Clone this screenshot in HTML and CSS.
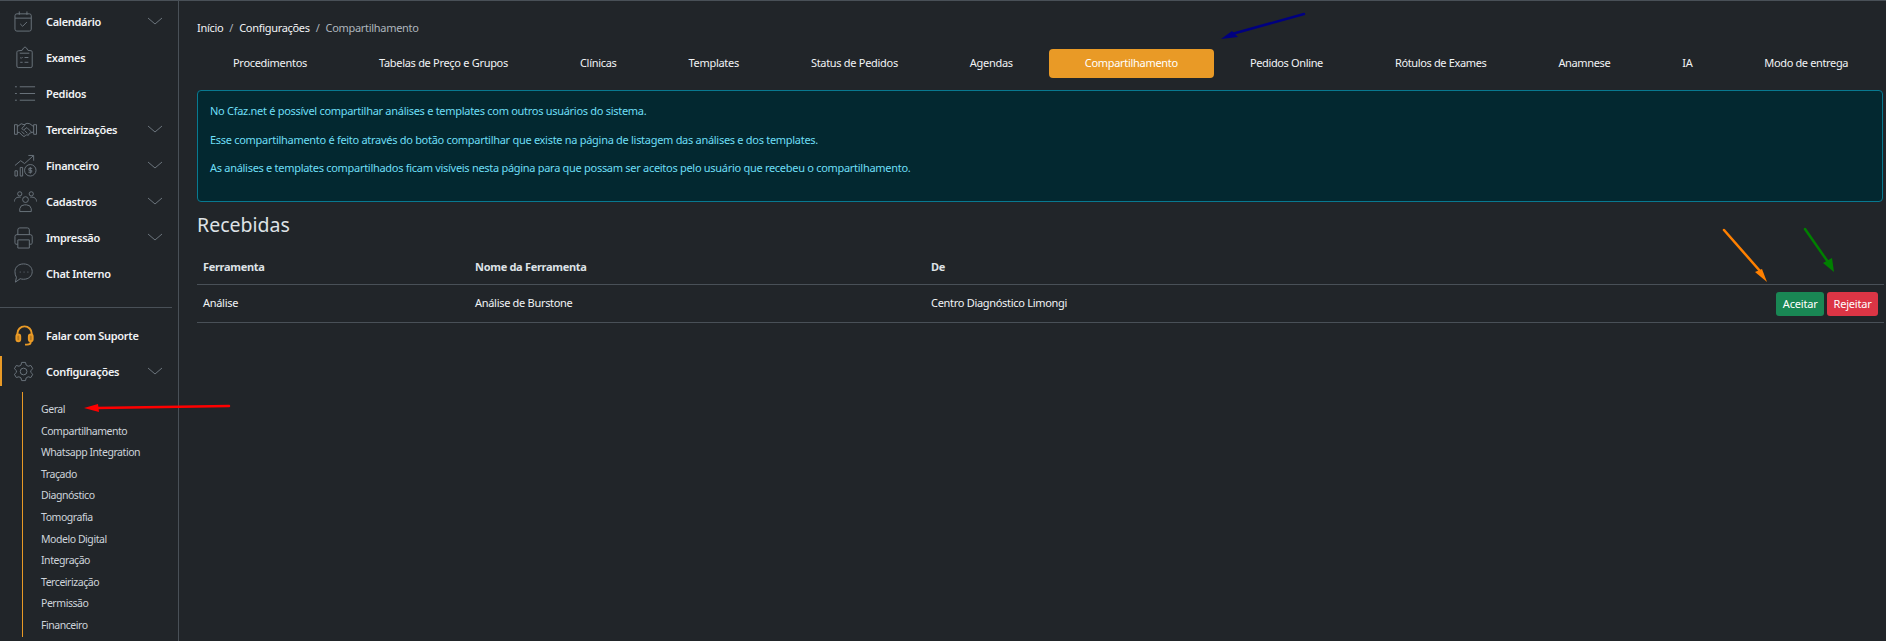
FILE: index.html
```html
<!DOCTYPE html>
<html lang="pt-BR"><head>
<meta charset="utf-8">
<title>Compartilhamento</title>
<link rel="stylesheet" href="styles.css">
</head><body>

<div class="layout">

<aside class="sidebar">
  <ul class="menu">
    <li class="menu-item">
      <svg class="icon" viewBox="0 0 24 24"><rect x="1" y="4" width="17" height="18" rx="2"/><path d="M1 8.500h17M5.500 1.500V5M13.500 1.500V5M6.500 14.500l2.500 2.500 4.500-4.500"/></svg>
      <span class="label">Calendário</span>
      <svg class="chevron" viewBox="0 0 16 8"><path d="M1 1l7 6 7-6"/></svg>
    </li>
    <li class="menu-item">
      <svg class="icon" viewBox="0 0 24 24"><path d="M5 5l3.500-.5L10 2l1.500-1 1.500 1 1.500 2.500L18 5c.8.100 1 .6 1 1.500V21c0 1-.5 1.500-1.500 1.500h-13C3.500 22.500 3 22 3 21V6.500C3 5.600 3.500 5.100 5 5zM6 7.500h10M11 12h4M11 17h4M6.500 12l1 1 1.500-1.500M6.500 17h2.500"/></svg>
      <span class="label">Exames</span>
    </li>
    <li class="menu-item">
      <svg class="icon" viewBox="0 0 24 24"><path d="M6 5h16M6 12h16M6 19h16M1 5h2M1 12h2M1 19h2"/></svg>
      <span class="label">Pedidos</span>
    </li>
    <li class="menu-item">
      <svg class="icon" viewBox="0 0 24 24"><path d="M.5 7h3v10h-3zM23.500 7h-3v10h3zM3.500 9l4-3 3 1 3-1.500 3 .5 4 3M3.500 15h2l4 4h2l1.500-1.500 2 .5 1-2 1.500-.5 3-1M12 7l-4 4 2 1.500 3.500-2.500 5 5M8 14l3 3M11 13l3 3"/></svg>
      <span class="label">Terceirizações</span>
      <svg class="chevron" viewBox="0 0 16 8"><path d="M1 1l7 6 7-6"/></svg>
    </li>
    <li class="menu-item">
      <svg class="icon" viewBox="0 0 24 24"><path d="M1 12l6-5 4 3 9-8M15 1.500h5.500V7M1 17.500h2.500V23H1zM6.500 14H9v9H6.500z"/><circle cx="17" cy="17" r="6"/><path d="M19 15h-3.500v2h3v2H15M17 13.500v7"/></svg>
      <span class="label">Financeiro</span>
      <svg class="chevron" viewBox="0 0 16 8"><path d="M1 1l7 6 7-6"/></svg>
    </li>
    <li class="menu-item">
      <svg class="icon" viewBox="0 0 24 24"><circle cx="12" cy="10" r="3"/><circle cx="6" cy="4" r="2.200"/><circle cx="18" cy="4" r="2.200"/><path d="M6 22.500v-3a5 5 0 0 1 5-4h2a5 5 0 0 1 5 4v3zM.5 12c0-3 2-5 6.500-4.500M23.500 12c0-3-2-5-6.500-4.500"/></svg>
      <span class="label">Cadastros</span>
      <svg class="chevron" viewBox="0 0 16 8"><path d="M1 1l7 6 7-6"/></svg>
    </li>
    <li class="menu-item">
      <svg class="icon" viewBox="0 0 24 24"><path d="M4 9V4a2 2 0 0 1 2-2h8a2 2 0 0 1 2 2v5M4 19H2a1.500 1.500 0 0 1-1-1.500V11a2 2 0 0 1 2-2h14a2 2 0 0 1 2 2v6.500a1.500 1.500 0 0 1-1 1.500h-2M4 14.500h12V23H4z"/></svg>
      <span class="label">Impressão</span>
      <svg class="chevron" viewBox="0 0 16 8"><path d="M1 1l7 6 7-6"/></svg>
    </li>
    <li class="menu-item">
      <svg class="icon" viewBox="0 0 24 24"><path d="M10 2c5.500 0 9 3.500 9 8s-3.500 8-9 8c-1.500 0-2.500-.2-3.500-.6L1.500 21l1-5C1.500 14.500 1 12.500 1 10c0-4.500 3.500-8 9-8z"/><path d="M6 10.500h1M10 10.500h1M14 10.500h1"/></svg>
      <span class="label">Chat Interno</span>
    </li>
  </ul>

  <div class="menu-divider"></div>

  <ul class="menu">
    <li class="menu-item">
      <svg class="icon icon-support" viewBox="0 0 24 24"><path d="M3.500 12v-2a7.500 7.500 0 0 1 15 0v2"/><rect class="pad" x="2.500" y="11" width="4" height="7" rx="2"/><rect class="pad" x="15.500" y="11" width="4" height="7" rx="2"/><path d="M17.500 18.500c0 2-1.500 3-4 3h-2"/></svg>
      <span class="label">Falar com Suporte</span>
    </li>
    <li class="menu-item is-open">
      <svg class="icon" viewBox="0 0 24 24"><circle cx="10" cy="12" r="3.500"/><path d="M8 2.500h4l.7 2.800 2.100 1.200 2.800-.8 2 3.400-2.100 2v1.800l2.100 2-2 3.400-2.800-.8-2.100 1.200-.7 2.800H8l-.7-2.800-2.100-1.200-2.800.8-2-3.400 2.100-2v-1.800L.4 9.100l2-3.400 2.800.8 2.100-1.200z"/></svg>
      <span class="label">Configurações</span>
      <svg class="chevron" viewBox="0 0 16 8"><path d="M1 1l7 6 7-6"/></svg>
    </li>
  </ul>

  <ul class="submenu">
    <li>Geral</li>
    <li>Compartilhamento</li>
    <li>Whatsapp Integration</li>
    <li>Traçado</li>
    <li>Diagnóstico</li>
    <li>Tomografia</li>
    <li>Modelo Digital</li>
    <li>Integração</li>
    <li>Terceirização</li>
    <li>Permissão</li>
    <li>Financeiro</li>
  </ul>
</aside>

<main class="content">
  <div class="breadcrumb">
    <span>Início</span><span class="sep">/</span><span>Configurações</span><span class="sep">/</span><span class="current">Compartilhamento</span>
  </div>

  <nav class="tabs">
    <a>Procedimentos</a>
    <a>Tabelas de Preço e Grupos</a>
    <a>Clínicas</a>
    <a>Templates</a>
    <a>Status de Pedidos</a>
    <a>Agendas</a>
    <a class="active">Compartilhamento</a>
    <a>Pedidos Online</a>
    <a>Rótulos de Exames</a>
    <a>Anamnese</a>
    <a>IA</a>
    <a>Modo de entrega</a>
  </nav>

  <div class="alert">
    <p>No Cfaz.net é possível compartilhar análises e templates com outros usuários do sistema.</p>
    <p>Esse compartilhamento é feito através do botão compartilhar que existe na página de listagem das análises e dos templates.</p>
    <p>As análises e templates compartilhados ficam visíveis nesta página para que possam ser aceitos pelo usuário que recebeu o compartilhamento.</p>
  </div>

  <h4 class="section-title">Recebidas</h4>

  <table class="shares">
    <thead>
      <tr><th class="col-tool">Ferramenta</th><th class="col-name">Nome da Ferramenta</th><th>De</th><th></th></tr>
    </thead>
    <tbody>
      <tr>
        <td>Análise</td>
        <td>Análise de Burstone</td>
        <td>Centro Diagnóstico Limongi</td>
        <td class="actions"><button class="btn btn-accept">Aceitar</button><button class="btn btn-reject">Rejeitar</button></td>
      </tr>
    </tbody>
  </table>
</main>

</div>

<!-- setas de anotacao por cima da tela -->
<svg class="annotations" viewBox="0 0 1886 641">
  <path class="arrow-line" stroke="#000080" d="M1304 14L1232 34"/>
  <path fill="#000080" d="M1221 39l11-8 6 6z"/>
  <path class="arrow-line" stroke="#ff8000" d="M1724 230L1760 271"/>
  <path fill="#ff8000" d="M1767 282l-12-10 7-3z"/>
  <path class="arrow-line" stroke="#008000" d="M1805 229L1828 262"/>
  <path fill="#008000" d="M1834 272l-11-9 9-5z"/>
  <path class="arrow-line" stroke="#ff0000" d="M229 406L96 408"/>
  <path fill="#ff0000" d="M84 408l14-4 1 8z"/>
</svg>

</body></html>
```

FILE: styles.css
```css
html, body {
  margin: 0;
  padding: 0;
  height: 641px;
  overflow: hidden;
  background-color: #212529;
}
body {
  font-family: "Noto Sans", "Open Sans", sans-serif;
  font-size: 11px;
  letter-spacing: -0.3px;
  color: #dee2e6;
}
ul {
  list-style: none;
  margin: 0;
  padding: 0;
}
.layout {
  display: flex;
  height: 640px;
  border-top: 1px solid #495057;
}

/* sidebar */
.sidebar {
  flex: 0 0 178px;
  border-right: 1px solid #495057;
  overflow: hidden;
}
.menu {
  padding-top: 2px;
}
.menu-item {
  display: flex;
  align-items: center;
  height: 36px;
  padding-left: 14px;
  font-weight: 600;
  color: #f1f3f5;
}
.menu-item .label {
  flex: 1;
  margin-left: 9px;
}
.icon {
  width: 23px;
  height: 23px;
  fill: none;
  stroke: #6c757d;
  stroke-width: 1;
}
.chevron {
  width: 16px;
  height: 8px;
  margin-right: 15px;
  fill: none;
  stroke: #6c757d;
  stroke-width: 1;
}
.icon-support {
  stroke: #e99a26;
  stroke-width: 2;
}
.icon-support .pad {
  fill: #b87a20;
}
.menu-divider {
  margin: 16px 6px 7px 0;
  border-top: 1px solid #495057;
}
.is-open {
  height: 30px;
  margin-top: 3px;
  box-shadow: inset 2px 0 0 #e99a26;
}
.submenu {
  margin: 6px 0 0 22px;
  padding: 7px 0 0 18px;
  border-left: 1px solid #e99a26;
  font-size: 10.500px;
  letter-spacing: -0.450px;
  line-height: 21.600px;
  color: #ced4da;
}

/* main column */
.content {
  flex: 1;
  min-width: 0;
  padding: 0 2px 0 18px;
}
.breadcrumb {
  display: flex;
  align-items: center;
  height: 20px;
  margin-top: 16px;
  color: #f1f3f5;
}
.sep {
  margin: 0 6px;
  color: #adb5bd;
}
.current {
  color: #adb5bd;
}
.tabs {
  display: flex;
  justify-content: space-between;
  margin: 12px 0 0;
  white-space: nowrap;
}
.tabs a {
  padding: 5px 36px 7px;
  line-height: 17px;
  border-radius: 4px;
  color: #f1f3f5;
}
.tabs .active {
  background-color: #e99a26;
  color: #fff;
}
.tabs .active ~ a {
  letter-spacing: -0.360px;
}
.alert {
  height: 112px;
  margin: 12px 1px 0 0;
  padding: 10px 12px;
  box-sizing: border-box;
  border: 1px solid #087990;
  border-radius: 4px;
  background-color: #032830;
  color: #6edff6;
  letter-spacing: -0.290px;
}
.alert p {
  margin: 0 0 9.500px;
  line-height: 19px;
}
.section-title {
  margin: 10px 0 0;
  font-size: 19.500px;
  font-weight: 400;
  letter-spacing: 0;
  line-height: 26px;
}
.shares {
  width: 100%;
  margin-top: 9px;
  border-collapse: collapse;
}
.shares th {
  text-align: left;
  font-weight: 700;
  height: 35px;
  padding: 2px 6px 0;
  border-bottom: 1px solid #495057;
}
.shares td {
  height: 35px;
  padding: 0 6px 2px;
  border-bottom: 1px solid #495057;
  color: #f1f3f5;
}
.col-tool {
  width: 260px;
}
.col-name {
  width: 444px;
}
.actions {
  text-align: right;
}
.btn {
  height: 24px;
  margin: 2px 0 0 3px;
  padding: 0 6.500px;
  border: 0;
  border-radius: 3px;
  font-family: inherit;
  font-size: 11px;
  letter-spacing: -0.2px;
  color: #fff;
}
.btn-accept {
  background-color: #198754;
}
.btn-reject {
  background-color: #dc3545;
}

/* anotacoes */
.annotations {
  position: absolute;
  left: 0;
  top: 0;
  width: 1886px;
  height: 641px;
  pointer-events: none;
}
.arrow-line {
  fill: none;
  stroke-width: 2.500;
  stroke-linecap: round;
}
```
